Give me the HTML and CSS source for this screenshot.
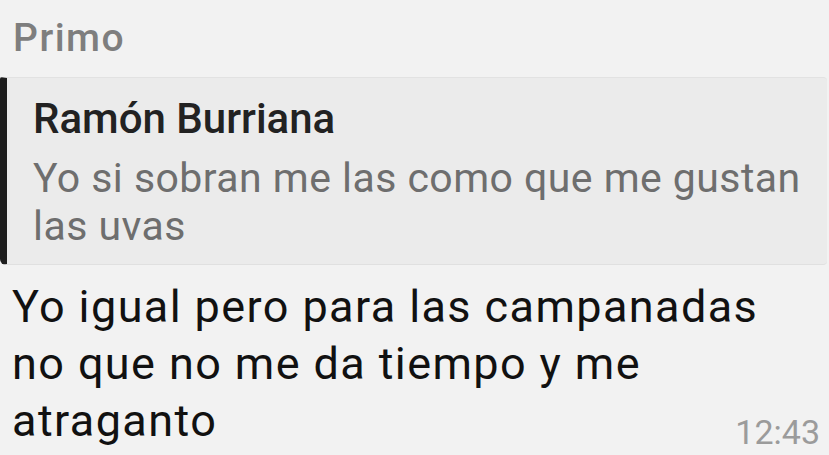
FILE: index.html
```html
<!DOCTYPE html>
<html lang="es">
<head>
<meta charset="utf-8">
<link rel="stylesheet" href="styles.css">
</head>
<body>
<div class="bubble">
  <div class="sender">Primo</div>
  <div class="quote">
    <div class="quote-author">Ramón Burriana</div>
    <div class="quote-text">Yo si sobran me las como que me gustan las uvas</div>
  </div>
  <div class="message">Yo igual pero para las campanadas no que no me da tiempo y me atraganto <span class="time">12:43</span></div>
</div>
</body>
</html>
```

FILE: styles.css
```css
html, body {
  margin: 0;
  padding: 0;
  background: #f2f2f2;
}
body {
  width: 829px;
  height: 455px;
  overflow: hidden;
  font-family: Roboto, "Noto Sans", sans-serif;
}
.bubble {
  display: flex;
  flex-direction: column;
}
.sender {
  padding: 16px 0 0 13px;
  font-size: 39px;
  line-height: 44px;
  font-weight: 500;
  letter-spacing: 1.5px;
  color: #7e7e7e;
}
.quote {
  margin-top: 17px;
  margin-right: 2px;
  background: #ebebeb;
  border-top: 1px solid #e2e2e2;
  border-bottom: 1px solid #e0e0e0;
  border-left: 7px solid #1e1e1e;
  border-radius: 2px 4px 4px 6px;
  padding: 17px 10px 14px 26px;
}
.quote-author {
  font-size: 42px;
  line-height: 48px;
  font-weight: 500;
  color: #222;
}
.quote-text {
  margin-top: 11px;
  font-size: 41px;
  line-height: 48px;
  letter-spacing: 0.45px;
  color: #6e6e6e;
}
.message {
  margin-top: 13px;
  padding: 0 47px 0 12px;
  font-size: 45px;
  line-height: 57px;
  letter-spacing: 1.4px;
  color: #111;
}
.time {
  float: right;
  margin: 20px -38px 0 0;
  font-size: 34px;
  line-height: 40px;
  letter-spacing: 0;
  color: #9b9b9b;
}
```
